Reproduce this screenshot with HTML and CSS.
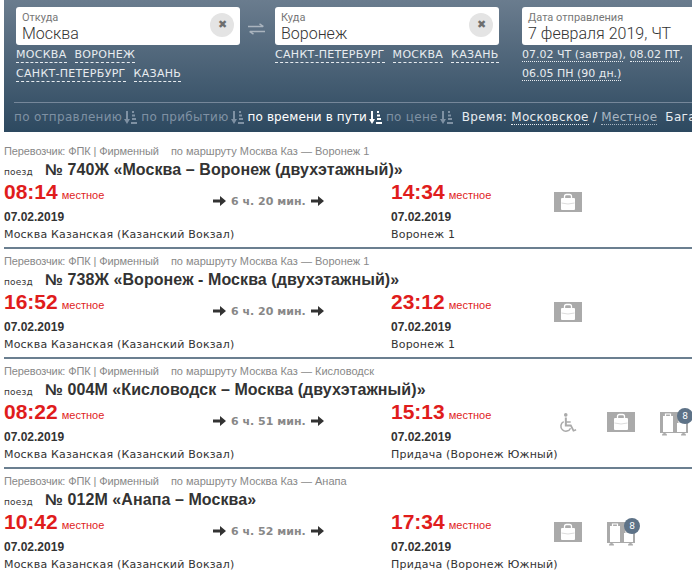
FILE: index.html
```html
<!doctype html>
<html>
<head>
    <title>Москва — Воронеж</title>
    <link rel="stylesheet" href="styles.css">
</head>

<body>
    <svg class="sprites" width="0" height="0">
        <symbol id="sort" viewBox="0 0 13 13">
            <path d="M2 0h2v8h2l-3 5-3-5h2z"/>
            <path d="M8 0h2v2h-2zM8 3.500h3v2h-3zM8 7h4v2h-4zM7 11h6v2h-6z"/>
        </symbol>
        <symbol id="arrow" viewBox="0 0 13 10">
            <path d="M0 3.500h7v-3.500l6 5-6 5v-3.500h-7z"/>
        </symbol>
        <symbol id="bag" viewBox="0 0 28 20">
            <rect width="28" height="20" fill="#aaa"/>
            <path d="M10.500 6v-1.500q0-2 2-2h3q2 0 2 2v1.500" fill="none" stroke="#fff" stroke-width="1.300"/>
            <path d="M8 6h12q1 0 1 1v10q0 1-1 1h-12q-1 0-1-1v-10q0-1 1-1z" fill="#fff"/>
            <path d="M7.500 11q6.500 2 13 0" fill="none" stroke="#ddd"/>
        </symbol>
        <symbol id="wheelchair" viewBox="0 0 20 22">
            <circle cx="7.500" cy="2" r="2" fill="#aaa"/>
            <path d="M6.500 5h2.200v4h4.300v1.800h-4.300v2h5l3 5.700 2-.8.600 1.500-3.700 1.500-3-5.900h-6.100z" fill="#aaa"/>
            <path d="M5.200 9.500a5.600 5.600 0 1 0 7.600 7.300" fill="none" stroke="#aaa" stroke-width="1.700"/>
        </symbol>
        <symbol id="luggage" viewBox="0 0 28 24">
            <path d="M0 0h28v21h-28z" fill="#aaa"/>
            <path d="M2 23.500a2.500 2.500 0 0 1 5 0zM21 23.500a2.500 2.500 0 0 1 5 0z" fill="#aaa"/>
            <path d="M3 4h10v16h-10z" fill="#fff"/>
            <path d="M5.500 4v-2h5v2" fill="none" stroke="#fff" stroke-width="1.200"/>
            <path d="M17 11h9v9h-9z" fill="#fff"/>
            <path d="M19 11v-2h5v2" fill="none" stroke="#fff"/>
        </symbol>
    </svg>

    <header class="search">
        <div class="fields">
            <div class="field-group field-from">
                <div class="field">
                    <span class="field-label">Откуда</span>
                    <span class="field-value">Москва</span>
                    <span class="clear">✖</span>
                </div>
                <div class="quick">
                    <a>МОСКВА</a><a>ВОРОНЕЖ</a><a>САНКТ-ПЕТЕРБУРГ</a><a>КАЗАНЬ</a>
                </div>
            </div>
            <svg class="swap" width="17" height="12" viewBox="0 0 17 12">
                <path d="M0 3.500h15M11.500 .8l4 2.700M17 8.500h-15M5.500 11.200l-4-2.700" fill="none" stroke="#aab4be" stroke-width="1.500"/>
            </svg>
            <div class="field-group field-to">
                <div class="field">
                    <span class="field-label">Куда</span>
                    <span class="field-value">Воронеж</span>
                    <span class="clear">✖</span>
                </div>
                <div class="quick">
                    <a>САНКТ-ПЕТЕРБУРГ</a><a>МОСКВА</a><a>КАЗАНЬ</a>
                </div>
            </div>
            <div class="field-group field-date">
                <div class="field">
                    <span class="field-label">Дата отправления</span>
                    <span class="field-value">7 февраля 2019, ЧТ</span>
                </div>
                <div class="quick-dates">
                    <a>07.02 ЧТ (завтра)</a>, <a>08.02 ПТ</a>, <a>06.05 ПН (90 дн.)</a>
                </div>
            </div>
        </div>
        <div class="sortbar">
            <span class="sort">по отправлению<svg class="sort-icon"><use href="#sort"/></svg></span>
            <span class="sort">по прибытию<svg class="sort-icon"><use href="#sort"/></svg></span>
            <span class="sort active">по времени в пути<svg class="sort-icon"><use href="#sort"/></svg></span>
            <span class="sort">по цене<svg class="sort-icon"><use href="#sort"/></svg></span>
            <span class="timezone">Время: <a class="tz-link">Московское</a> / <a class="tz-link muted">Местное</a></span>
            <span class="baggage">Багаж</span>
        </div>
    </header>

    <main class="trains">
        <section class="train">
            <p class="carrier">Перевозчик: ФПК | Фирменный <span class="route">по маршруту Москва Каз — Воронеж 1</span></p>
            <p class="title"><span class="title-tag">поезд</span>№ 740Ж «Москва – Воронеж (двухэтажный)»</p>
            <div class="details">
                <div class="stop">
                    <div class="time">08:14<span class="time-note">местное</span></div>
                    <div class="date">07.02.2019</div>
                    <div class="station">Москва Казанская (Казанский Вокзал)</div>
                </div>
                <div class="duration"><svg class="arrow"><use href="#arrow"/></svg>6 ч. 20 мин.<svg class="arrow"><use href="#arrow"/></svg></div>
                <div class="stop">
                    <div class="time">14:34<span class="time-note">местное</span></div>
                    <div class="date">07.02.2019</div>
                    <div class="station">Воронеж 1</div>
                </div>
                <div class="services">
                    <div class="service"><svg class="icon-bag"><use href="#bag"/></svg></div>
                </div>
            </div>
        </section>

        <section class="train">
            <p class="carrier">Перевозчик: ФПК | Фирменный <span class="route">по маршруту Москва Каз — Воронеж 1</span></p>
            <p class="title"><span class="title-tag">поезд</span>№ 738Ж «Воронеж - Москва (двухэтажный)»</p>
            <div class="details">
                <div class="stop">
                    <div class="time">16:52<span class="time-note">местное</span></div>
                    <div class="date">07.02.2019</div>
                    <div class="station">Москва Казанская (Казанский Вокзал)</div>
                </div>
                <div class="duration"><svg class="arrow"><use href="#arrow"/></svg>6 ч. 20 мин.<svg class="arrow"><use href="#arrow"/></svg></div>
                <div class="stop">
                    <div class="time">23:12<span class="time-note">местное</span></div>
                    <div class="date">07.02.2019</div>
                    <div class="station">Воронеж 1</div>
                </div>
                <div class="services">
                    <div class="service"><svg class="icon-bag"><use href="#bag"/></svg></div>
                </div>
            </div>
        </section>

        <section class="train">
            <p class="carrier">Перевозчик: ФПК | Фирменный <span class="route">по маршруту Москва Каз — Кисловодск</span></p>
            <p class="title"><span class="title-tag">поезд</span>№ 004М «Кисловодск – Москва (двухэтажный)»</p>
            <div class="details">
                <div class="stop">
                    <div class="time">08:22<span class="time-note">местное</span></div>
                    <div class="date">07.02.2019</div>
                    <div class="station">Москва Казанская (Казанский Вокзал)</div>
                </div>
                <div class="duration"><svg class="arrow"><use href="#arrow"/></svg>6 ч. 51 мин.<svg class="arrow"><use href="#arrow"/></svg></div>
                <div class="stop">
                    <div class="time">15:13<span class="time-note">местное</span></div>
                    <div class="date">07.02.2019</div>
                    <div class="station">Придача (Воронеж Южный)</div>
                </div>
                <div class="services">
                    <div class="service"><svg class="icon-wheelchair"><use href="#wheelchair"/></svg></div>
                    <div class="service"><svg class="icon-bag"><use href="#bag"/></svg></div>
                    <div class="service"><svg class="icon-luggage"><use href="#luggage"/></svg><span class="badge">8</span></div>
                </div>
            </div>
        </section>

        <section class="train">
            <p class="carrier">Перевозчик: ФПК | Фирменный <span class="route">по маршруту Москва Каз — Анапа</span></p>
            <p class="title"><span class="title-tag">поезд</span>№ 012М «Анапа – Москва»</p>
            <div class="details">
                <div class="stop">
                    <div class="time">10:42<span class="time-note">местное</span></div>
                    <div class="date">07.02.2019</div>
                    <div class="station">Москва Казанская (Казанский Вокзал)</div>
                </div>
                <div class="duration"><svg class="arrow"><use href="#arrow"/></svg>6 ч. 52 мин.<svg class="arrow"><use href="#arrow"/></svg></div>
                <div class="stop">
                    <div class="time">17:34<span class="time-note">местное</span></div>
                    <div class="date">07.02.2019</div>
                    <div class="station">Придача (Воронеж Южный)</div>
                </div>
                <div class="services">
                    <div class="service"><svg class="icon-bag"><use href="#bag"/></svg></div>
                    <div class="service"><svg class="icon-luggage"><use href="#luggage"/></svg><span class="badge">8</span></div>
                </div>
            </div>
        </section>
    </main>
</body>
</html>
```

FILE: styles.css
```css
html, body {
    height: 577px;
    overflow: hidden;
}

body {
    margin: 0;
    padding-left: 4px;
    width: 688px;
    background-color: #fff;
    font-family: "DejaVu Sans", sans-serif;
    color: #333;
}

.sprites {
    display: block;
    height: 0;
}

a {
    cursor: pointer;
}

/* search header */
.search {
    height: 132px;
    box-sizing: border-box;
    padding: 7px 0 0 12px;
    background: linear-gradient(to bottom, #6a7c8e, #2d4960);
    overflow: hidden;
}

.fields {
    display: flex;
    height: 95px;
    width: 800px;
}

.field-group {
    flex-shrink: 0;
}

.field-from,
.field-to {
    width: 224px;
}

.field-date {
    width: 224px;
    margin-left: 23px;
}

.swap {
    flex-shrink: 0;
    margin: 16px 10px 0 8px;
}

.field {
    position: relative;
    height: 38px;
    box-sizing: border-box;
    padding: 5px 6px;
    background-color: #fff;
    border-radius: 3px;
    font-family: Roboto, sans-serif;
}

.field-label {
    display: block;
    font-size: 11px;
    line-height: 12px;
    color: #777;
}

.field-value {
    display: block;
    margin-top: 1px;
    font-size: 16px;
    font-weight: 300;
    line-height: 18px;
    color: #333;
    white-space: nowrap;
}

.clear {
    position: absolute;
    top: 6px;
    right: 6px;
    width: 24px;
    height: 24px;
    border-radius: 50%;
    background-color: #e4e4e4;
    color: #6e6e6e;
    font-size: 11px;
    line-height: 24px;
    text-align: center;
}

.quick {
    display: flex;
    flex-wrap: wrap;
    gap: 0 8px;
    margin-top: 3px;
    width: 200px;
}

.field-to .quick {
    width: 224px;
}

.quick a {
    font-size: 11px;
    line-height: 14px;
    margin-bottom: 4px;
    letter-spacing: .3px;
    color: #e8ecf0;
    border-bottom: 1px dashed #e8ecf0;
}

.quick-dates {
    width: 170px;
    font-size: 11px;
    line-height: 19px;
    color: #e8ecf0;
}

.quick-dates a {
    border-bottom: 1px dotted #e8ecf0;
}

.sortbar {
    display: flex;
    align-items: center;
    height: 28px;
    width: 700px;
    margin-left: -2px;
    border-top: 1px solid #76879a;
    font-size: 12px;
    letter-spacing: .3px;
    white-space: nowrap;
    color: #7f91a3;
}

.sort {
    display: flex;
    align-items: center;
    margin-right: 4px;
}

.sort.active {
    letter-spacing: .1px;
    color: #fff;
}

.sort-icon {
    width: 13px;
    height: 13px;
    margin-left: 2px;
    fill: currentColor;
}

.timezone {
    margin-left: 5px;
    color: #e8ecf0;
}

.tz-link {
    border-bottom: 1px dotted #e8ecf0;
}

.tz-link.muted {
    color: #a9b6c2;
    border-bottom-color: #a9b6c2;
}

.baggage {
    margin-left: 8px;
    color: #e8ecf0;
}

/* train list */
.trains {
    padding-top: 7px;
}

.train {
    height: 110px;
    box-sizing: border-box;
    padding-top: 6px;
    border-bottom: 2px solid #6b7f90;
}

.train:last-child {
    border-bottom: none;
}

.carrier {
    margin: 0;
    font-family: "Liberation Sans", sans-serif;
    font-size: 11px;
    line-height: 12px;
    letter-spacing: -.1px;
    color: #888;
    white-space: nowrap;
}

.route {
    margin-left: 9px;
    letter-spacing: 0;
}

.title {
    margin: 3px 0 0;
    font-family: "Liberation Sans", sans-serif;
    font-size: 16px;
    font-weight: bold;
    line-height: 20px;
    letter-spacing: .08px;
    white-space: nowrap;
}

.title-tag {
    display: inline-block;
    width: 41px;
    font-family: "DejaVu Sans", sans-serif;
    font-size: 9px;
    font-weight: normal;
    letter-spacing: .2px;
}

.details {
    display: grid;
    grid-template-columns: 209px 178px 163px 1fr;
    margin-top: -2px;
}

.time {
    font-family: "Liberation Sans", sans-serif;
    font-size: 21px;
    font-weight: bold;
    line-height: 24px;
    color: #e01c1c;
}

.time-note {
    margin-left: 4px;
    font-size: 11px;
    font-weight: normal;
}

.date {
    margin-top: 2px;
    font-family: "Liberation Sans", sans-serif;
    font-size: 12px;
    font-weight: bold;
    line-height: 16px;
}

.station {
    margin-top: 3px;
    font-size: 11px;
    line-height: 14px;
    letter-spacing: .2px;
    white-space: nowrap;
}

.duration {
    display: flex;
    align-items: center;
    height: 18px;
    margin-top: 12px;
    font-size: 11px;
    font-weight: bold;
    color: #888;
}

.arrow {
    width: 13px;
    height: 10px;
    fill: #333;
}

.duration .arrow:first-child {
    margin-right: 5px;
}

.duration .arrow:last-child {
    margin-left: 5px;
}

.services {
    display: flex;
    padding-top: 12px;
}

.service {
    position: relative;
    width: 53px;
    flex-shrink: 0;
}

.icon-bag {
    display: block;
    width: 28px;
    height: 20px;
}

.icon-wheelchair {
    display: block;
    width: 18px;
    height: 20px;
    margin: 1px 0 0 5px;
}

.icon-luggage {
    display: block;
    width: 28px;
    height: 24px;
}

.badge {
    position: absolute;
    top: -4px;
    left: 17px;
    width: 16px;
    height: 16px;
    border-radius: 50%;
    background-color: #5d7287;
    color: #fff;
    font-size: 9px;
    line-height: 16px;
    text-align: center;
}
```
